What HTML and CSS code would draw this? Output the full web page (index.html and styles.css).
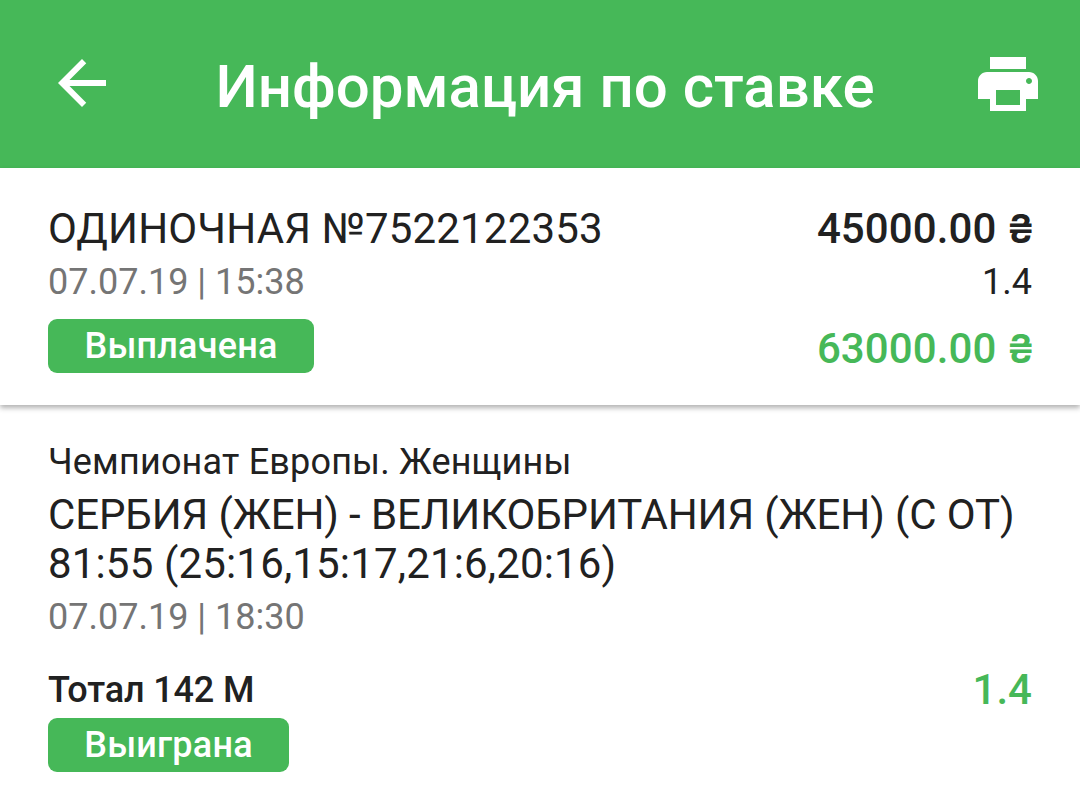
FILE: index.html
```html
<!DOCTYPE html>
<html lang="ru">
<head>
	<meta charset="utf-8">
	<title>Информация по ставке</title>
	<link rel="stylesheet" href="styles.css">
</head>
<body>
	<header class="topbar">
		<svg class="back" viewBox="4 4 16 16"><path d="M20 11H7.83l5.59-5.59L12 4l-8 8 8 8 1.41-1.41L7.83 13H20v-2z"/></svg>
		<h1>Информация по ставке</h1>
		<svg class="print" viewBox="2 3 20 18"><path d="M19 8H5c-1.66 0-3 1.34-3 3v6h4v4h12v-4h4v-6c0-1.66-1.34-3-3-3zm-3 11H8v-5h8v5zm3-7c-.55 0-1-.45-1-1s.45-1 1-1 1 .45 1 1-.45 1-1 1zm-1-9H6v4h12V3z"/></svg>
	</header>
	<section class="summary">
		<div class="left">
			<div class="type">ОДИНОЧНАЯ №7522122353</div>
			<div class="date">07.07.19 | 15:38</div>
			<span class="badge">Выплачена</span>
		</div>
		<div class="right">
			<div class="stake">45000.00 <span class="cur">₴</span></div>
			<div class="odds">1.4</div>
			<div class="payout">63000.00 <span class="cur">₴</span></div>
		</div>
	</section>
	<main class="event">
		<div class="league">Чемпионат Европы. Женщины</div>
		<div class="match">СЕРБИЯ (ЖЕН) - ВЕЛИКОБРИТАНИЯ (ЖЕН) (С ОТ)</div>
		<div class="score">81:55 (25:16,15:17,21:6,20:16)</div>
		<div class="date">07.07.19 | 18:30</div>
		<div class="outcome">
			<span class="pick">Тотал 142 М</span>
			<span class="coef">1.4</span>
		</div>
		<span class="badge won">Выиграна</span>
	</main>
</body>
</html>
```

FILE: styles.css
```css
body{
  margin:0;
  height:802px;
  overflow:hidden;
  background-color:#fff;
  color:#212121;
  font-family:Roboto, "Noto Sans", sans-serif;
  white-space:nowrap;
}
.topbar{
  box-sizing:border-box;
  height:168px;
  padding:0 42px 0 58px;
  display:flex;
  align-items:center;
  justify-content:space-between;
  background-color:#46b858;
}
.topbar h1{
  margin:4px 0 0 6px;
  color:#fff;
  font-size:60px;
  font-weight:500;
}
.topbar svg{
  fill:#fff;
}
.back{
  width:48px;
  height:48px;
  margin-bottom:2px;
}
.print{
  width:60px;
  height:54px;
}
.summary{
  box-sizing:border-box;
  height:237px;
  padding:36px 48px 0;
  display:flex;
  justify-content:space-between;
  box-shadow:0 3px 5px rgba(0,0,0,.3);
}
.right{
  text-align:right;
}
.type, .stake, .payout, .match, .score{
  font-size:42px;
  line-height:49px;
}
.type{
  letter-spacing:.15px;
}
.stake, .payout{
  font-weight:500;
  letter-spacing:.1px;
}
.cur{
  display:inline-block;
  width:25px;
  font-family:Inter, sans-serif;
  font-size:39px;
  font-weight:600;
  line-height:40px;
  text-align:center;
}
.date, .odds{
  font-size:36px;
  line-height:42px;
  margin-top:8px;
}
.date{
  color:#757575;
}
.payout{
  margin-top:21px;
  color:#46b858;
}
.badge{
  box-sizing:border-box;
  display:block;
  width:266px;
  height:54px;
  margin-top:16px;
  border-radius:9px;
  background-color:#46b858;
  color:#fff;
  font-size:36px;
  font-weight:500;
  letter-spacing:.2px;
  line-height:54px;
  text-align:center;
}
.event{
  padding:36px 48px 0;
}
.league{
  font-size:36px;
  letter-spacing:.18px;
  line-height:42px;
}
.match{
  margin-top:7px;
  letter-spacing:-.12px;
}
.score{
  letter-spacing:.16px;
}
.outcome{
  display:flex;
  justify-content:space-between;
  align-items:center;
  height:49px;
  margin-top:27px;
}
.pick{
  font-size:36px;
  font-weight:500;
  letter-spacing:-.15px;
}
.coef{
  color:#46b858;
  font-size:42px;
  font-weight:500;
}
.won{
  width:241px;
  margin-top:4px;
}
```
